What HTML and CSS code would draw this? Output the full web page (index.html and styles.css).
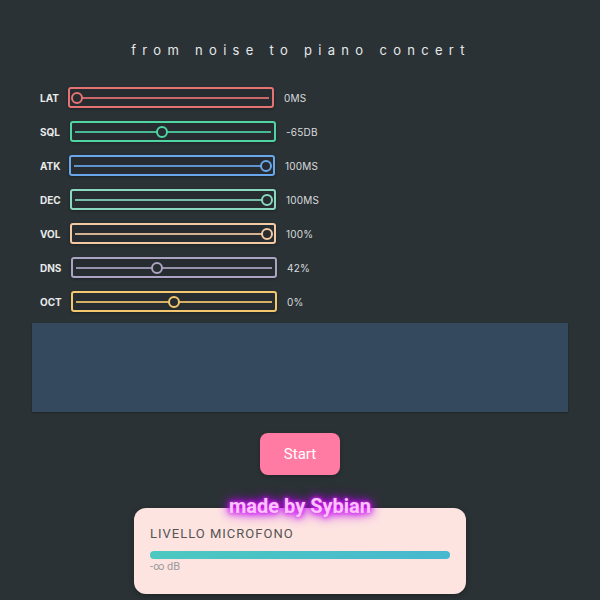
FILE: index.html
```html
<!DOCTYPE html>
<html>
<head>
<meta charset="utf-8">
<link rel="stylesheet" href="styles.css">
</head>
<body>
<div class="page">
  <h1 class="title">from noise to piano concert</h1>
  <div class="controls">
    <div class="row c-lat"><span class="lbl">LAT</span><div class="slider"><div class="track"></div><div class="range"><div class="thumb" style="left:0%"></div></div></div><span class="val">0MS</span></div>
    <div class="row c-sql"><span class="lbl">SQL</span><div class="slider"><div class="track"></div><div class="range"><div class="thumb" style="left:44%"></div></div></div><span class="val">-65DB</span></div>
    <div class="row c-atk"><span class="lbl">ATK</span><div class="slider"><div class="track"></div><div class="range"><div class="thumb" style="left:100%"></div></div></div><span class="val">100MS</span></div>
    <div class="row c-dec"><span class="lbl">DEC</span><div class="slider"><div class="track"></div><div class="range"><div class="thumb" style="left:100%"></div></div></div><span class="val">100MS</span></div>
    <div class="row c-vol"><span class="lbl">VOL</span><div class="slider"><div class="track"></div><div class="range"><div class="thumb" style="left:100%"></div></div></div><span class="val">100%</span></div>
    <div class="row c-dns"><span class="lbl">DNS</span><div class="slider"><div class="track"></div><div class="range"><div class="thumb" style="left:41%"></div></div></div><span class="val">42%</span></div>
    <div class="row c-oct"><span class="lbl">OCT</span><div class="slider"><div class="track"></div><div class="range"><div class="thumb" style="left:50%"></div></div></div><span class="val">0%</span></div>
  </div>
  <div class="canvas"></div>
  <div class="actions"><button class="start">Start</button></div>
  <div class="meter-wrap">
    <div class="meter">
      <div class="meter-title">LIVELLO MICROFONO</div>
      <div class="meter-bar"></div>
      <div class="meter-db">-∞ dB</div>
    </div>
    <div class="credit">made by Sybian</div>
  </div>
</div>
</body>
</html>
```
FILE: styles.css
```css
html, body {
  margin: 0;
  padding: 0;
  background: #2b3235;
  font-family: Inter, "Open Sans", sans-serif;
}
.page {
  width: 600px;
  height: 600px;
  overflow: hidden;
  display: flex;
  flex-direction: column;
}
.title {
  margin: 42px 0 0 0;
  text-align: center;
  font-weight: 400;
  font-size: 13px;
  line-height: 16px;
  color: #e4e8ea;
  letter-spacing: 6.3px;
  padding-left: 2px;
}
.controls {
  margin-top: 29px;
  padding-left: 40px;
  display: flex;
  flex-direction: column;
  gap: 13px;
}
.row {
  display: flex;
  align-items: center;
  height: 21px;
}
.lbl {
  font-size: 10px;
  font-weight: 700;
  color: #e8eaeb;
  width: 28px;
}
.slider {
  position: relative;
  width: 202px;
  height: 17px;
  border: 2px solid var(--c);
  border-radius: 3px;
  background: #262c2f;
  box-shadow: 0 1px 3px rgba(0,0,0,0.35);
}
.track {
  position: absolute;
  left: 3px;
  right: 3px;
  top: 7.5px;
  height: 2px;
  background: var(--c);
  opacity: 0.85;
}
.range {
  position: absolute;
  left: 7px;
  right: 7px;
  top: 0;
  bottom: 0;
}
.thumb {
  position: absolute;
  top: 2.5px;
  width: 8px;
  height: 8px;
  border: 2px solid var(--c);
  border-radius: 50%;
  background: #262c2f;
  transform: translateX(-50%);
}
.val {
  margin-left: 10px;
  font-size: 10px;
  color: #d8dcde;
  letter-spacing: 0.2px;
}
.c-lat { --c: #e57373; }
.c-lat .lbl { width: 28px; }
.c-sql { --c: #4fd4a4; }
.c-sql .lbl { width: 30px; }
.c-atk { --c: #6aa7ea; }
.c-atk .lbl { width: 29px; }
.c-dec { --c: #8ad8bf; }
.c-dec .lbl { width: 30px; }
.c-vol { --c: #f2c9a2; }
.c-vol .lbl { width: 30px; }
.c-dns { --c: #aaa4c2; }
.c-dns .lbl { width: 31px; }
.c-oct { --c: #f2c76e; }
.c-oct .lbl { width: 31px; }
.canvas {
  margin: 11px 32px 0 32px;
  height: 89px;
  background: #34495e;
  box-shadow: 0 1px 2px rgba(0,0,0,0.3);
}
.actions {
  display: flex;
  justify-content: center;
  margin-top: 21px;
}
.start {
  width: 80px;
  height: 42px;
  border: none;
  border-radius: 8px;
  background: #ff7ba4;
  color: #fff;
  font-family: Roboto, sans-serif;
  font-size: 15px;
  box-shadow: 0 2px 4px rgba(0,0,0,0.25);
}
.meter-wrap {
  position: relative;
  margin-top: 33px;
  display: flex;
  justify-content: center;
}
.meter {
  width: 300px;
  height: 62px;
  background: #fde4e1;
  border-radius: 12px;
  padding: 18px 16px 6px 16px;
  box-shadow: 0 2px 6px rgba(0,0,0,0.3);
}
.meter-title {
  font-family: Roboto, sans-serif;
  font-size: 13px;
  letter-spacing: 1px;
  color: #555;
  line-height: 16px;
}
.meter-bar {
  margin-top: 9px;
  height: 8px;
  border-radius: 4px;
  background: linear-gradient(90deg, #4cc9bf, #48b8cf);
}
.meter-db {
  font-family: Roboto, sans-serif;
  font-size: 11px;
  color: #9a9a9a;
  margin-top: 1px;
}
.credit {
  position: absolute;
  top: -14px;
  left: 0;
  right: 0;
  text-align: center;
  font-family: Roboto, sans-serif;
  font-size: 20px;
  line-height: 24px;
  font-weight: 700;
  color: #fcc4fa;
  text-shadow: 0 0 3px #e040fb, 0 0 6px #d500f9, 0 0 10px #c000f0, 0 0 14px #aa00ff;
}
```
